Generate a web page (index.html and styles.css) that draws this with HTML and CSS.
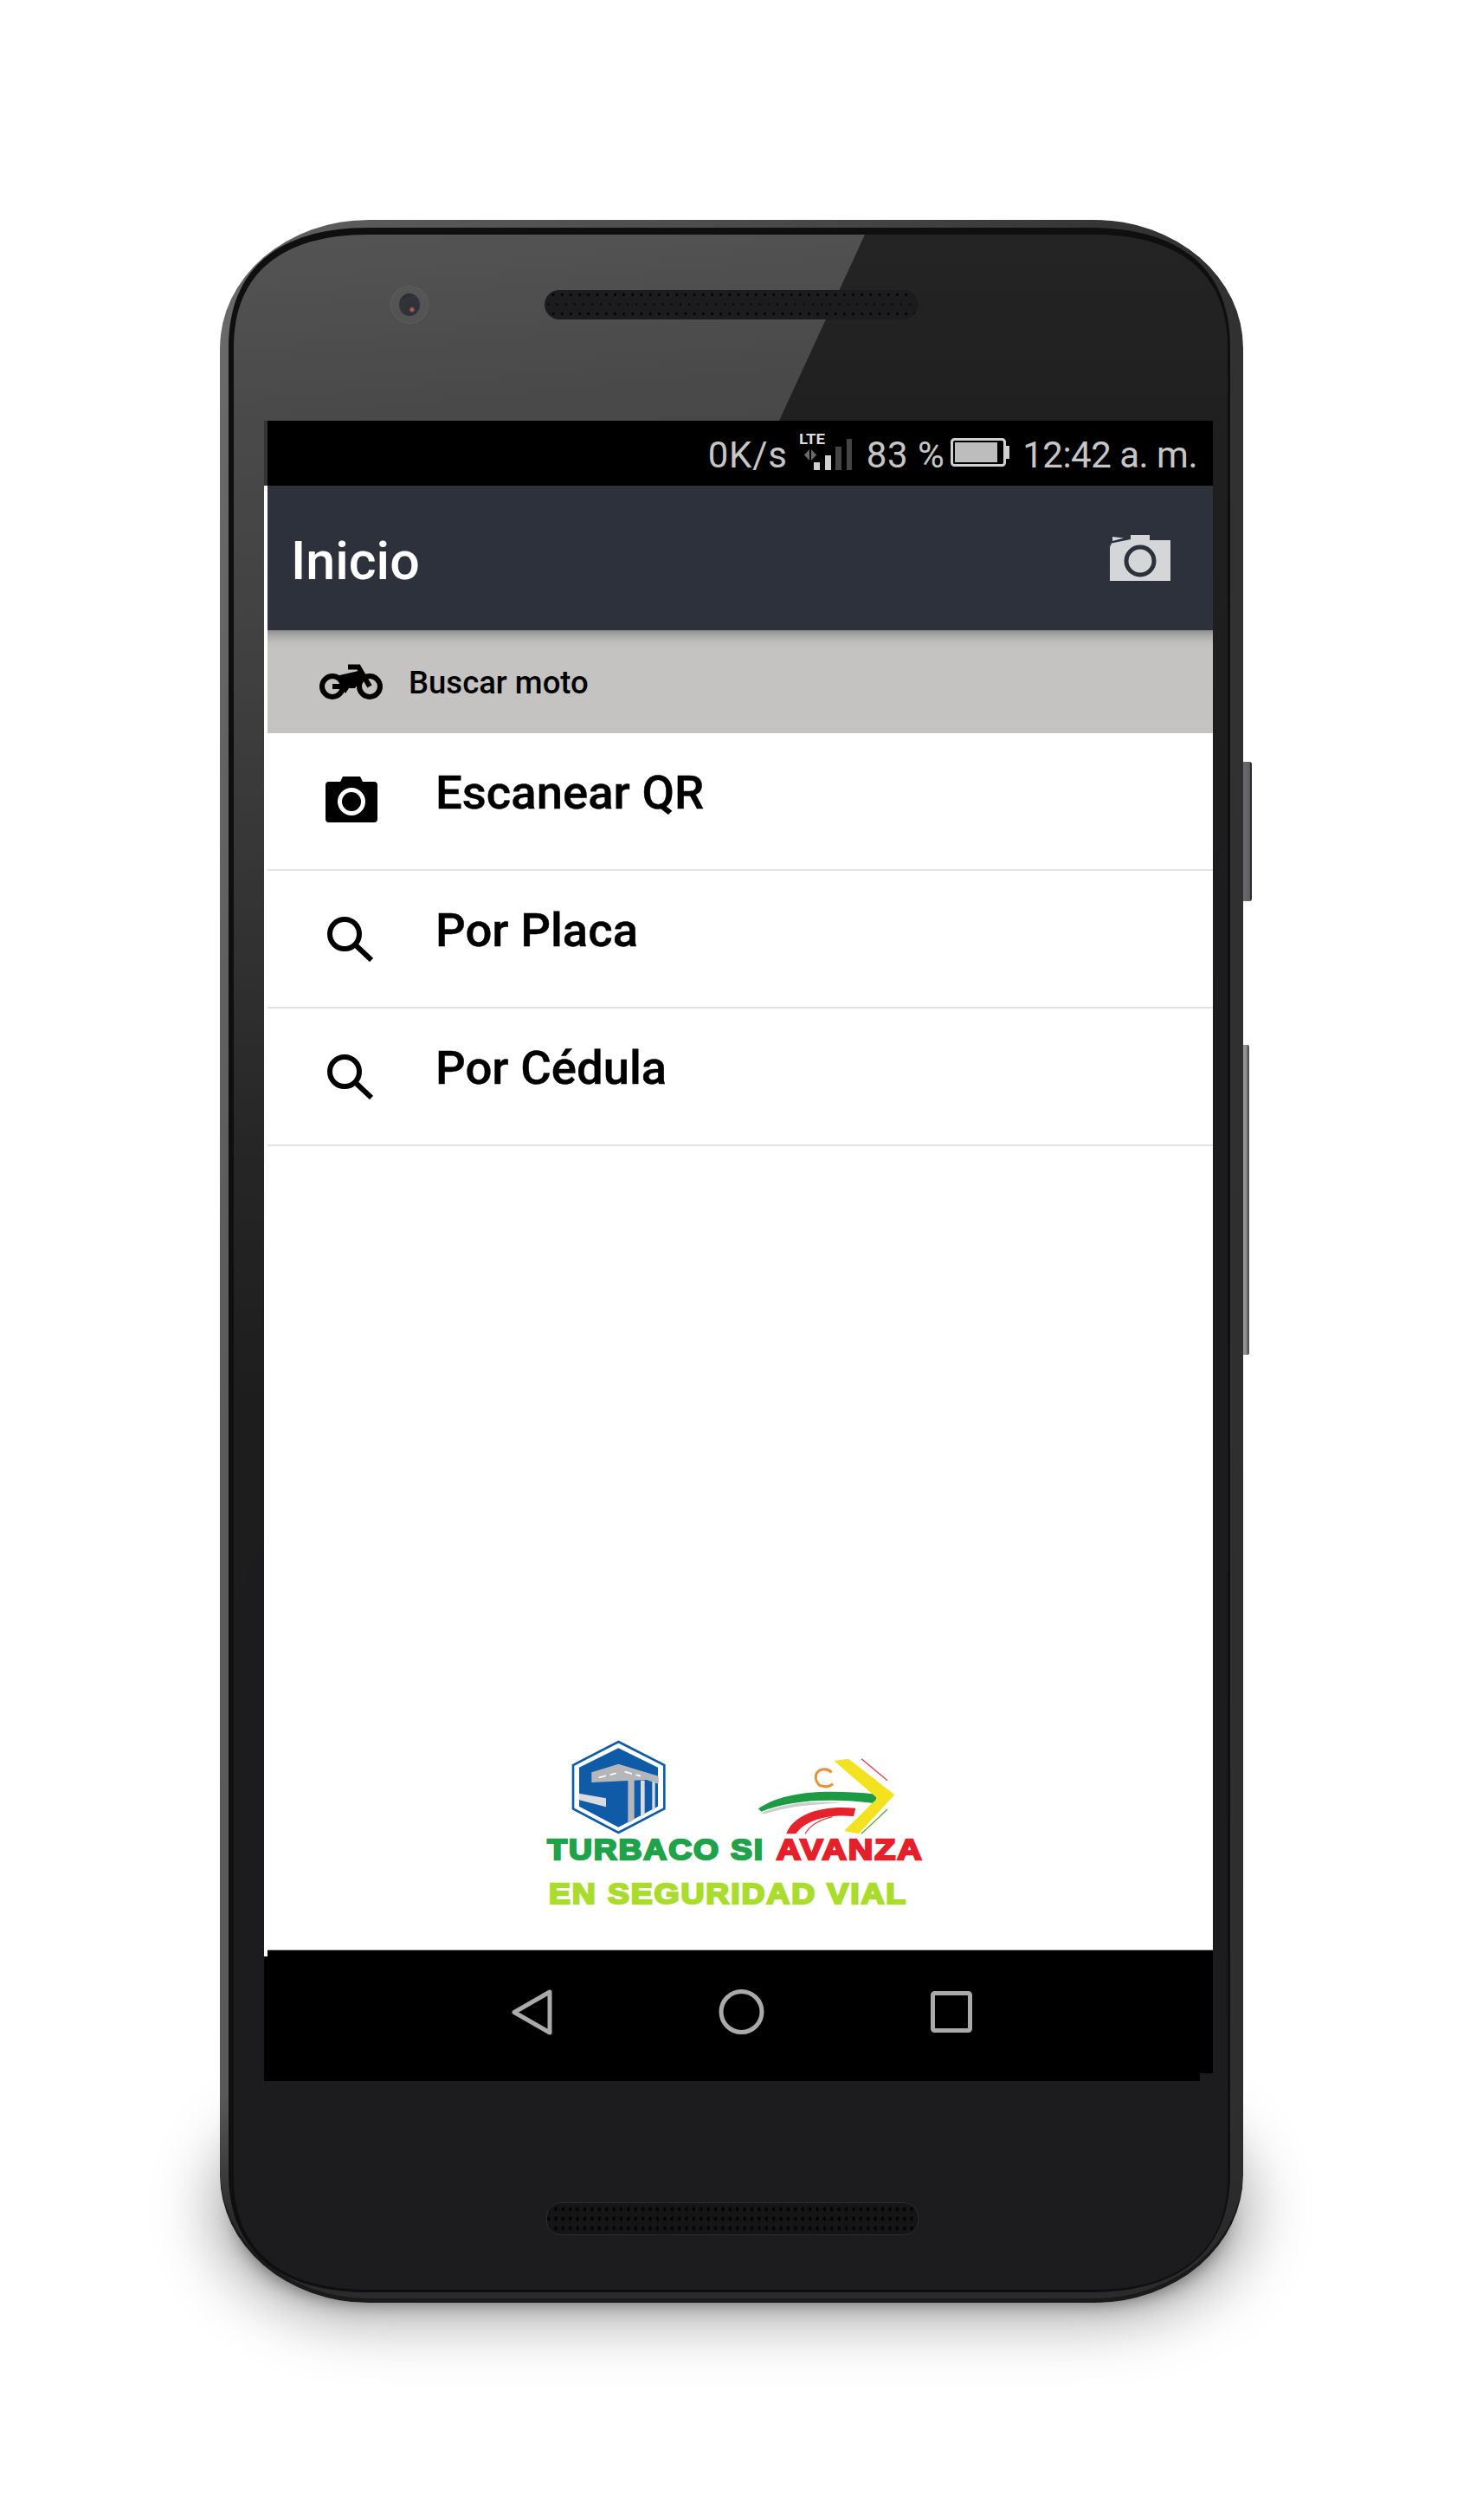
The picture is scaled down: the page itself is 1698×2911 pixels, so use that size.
FILE: index.html
```html
<!DOCTYPE html>
<html lang="es">
<head>
<meta charset="utf-8">
<title>Inicio</title>
<link rel="stylesheet" href="styles.css">
</head>
<body>
<main class="stage">
  <div class="phone">
    <span class="side-key key-power"></span>
    <span class="side-key key-volume"></span>
    <div class="shell">
    <div class="rim">
      <div class="glass">
        <header class="bezel bezel-top">
          <div class="lens"><span class="lens-core"></span></div>
          <div class="speaker speaker-top"></div>
        </header>
        <section class="screen">
          <div class="status">
            <span class="st-speed">0K/s</span>
            <svg class="st-signal" viewBox="0 -4 64 48" width="64" height="48">
              <text class="lte" x="1" y="12" textLength="30" lengthAdjust="spacingAndGlyphs">LTE</text>
              <path class="sig-dim" d="M13 18v13l-6-6.500zM15 18v13l6-6.500z"/>
              <rect class="sig-on" x="18" y="33" width="7" height="9"/>
              <rect class="sig-on" x="31" y="25" width="7" height="17"/>
              <rect class="sig-off" x="43" y="15" width="7" height="27"/>
              <rect class="sig-off" x="56" y="6" width="6" height="36"/>
            </svg>
            <span class="st-batt">83 %</span>
            <svg class="st-battery" viewBox="0 0 68 33" width="68" height="33">
              <rect class="bat-frame" x="1.500" y="1.500" width="61" height="30" rx="3"/>
              <rect class="bat-fill" x="5" y="5" width="49" height="23"/>
              <rect class="bat-fill-light" x="64" y="9" width="4" height="15"/>
            </svg>
            <span class="st-time">12:42 a. m.</span>
          </div>
          <div class="appbar">
            <h1 class="appbar-title">Inicio</h1>
            <svg class="appbar-camera" viewBox="0 0 70 53" width="70" height="53">
              <path class="cam-light" d="M0 53V14L2 9.500 24 5V0H46V6H70V53Z"/>
              <path class="cam-light" d="M3 2 16 3.500 3 7Z"/>
              <ellipse class="cam-ring" cx="35" cy="30" rx="16" ry="16"/>
            </svg>
          </div>
          <div class="section-bar">
            <svg class="moto" viewBox="0 0 73 41" width="73" height="41">
              <circle class="moto-stroke" cx="15" cy="26" r="12"/>
              <circle class="moto-stroke" cx="58" cy="26" r="12"/>
              <path class="moto-stroke" d="M33 3.500H45L58 26"/>
              <path class="moto-stroke" d="M15 26H30"/>
              <path class="moto-fill" d="M19 14 45 8 51 15 41 28 34 28 30 34 24 24Z"/>
            </svg>
            <span class="section-label">Buscar moto</span>
          </div>
          <ul class="menu">
            <li class="menu-row">
              <svg class="menu-icon icon-cam" viewBox="0 0 60 53" width="60" height="53">
                <path class="cam-black" d="M4 6H17L20 0H40L43 6H56Q60 6 60 10V49Q60 53 56 53H4Q0 53 0 49V10Q0 6 4 6Z"/>
                <circle class="cam-white" cx="30" cy="29" r="13.500"/>
              </svg>
              <span class="menu-text">Escanear QR</span>
            </li>
            <li class="menu-row">
              <svg class="menu-icon icon-search" viewBox="0 0 53 52" width="53" height="52">
                <circle class="search-stroke" cx="20" cy="20" r="17"/>
                <path class="search-stroke" d="M33 33 51 50"/>
              </svg>
              <span class="menu-text">Por Placa</span>
            </li>
            <li class="menu-row">
              <svg class="menu-icon icon-search" viewBox="0 0 53 52" width="53" height="52">
                <circle class="search-stroke" cx="20" cy="20" r="17"/>
                <path class="search-stroke" d="M33 33 51 50"/>
              </svg>
              <span class="menu-text">Por Cédula</span>
            </li>
          </ul>
          <div class="brand">
            <svg class="brand-art" viewBox="0 0 1440 720" width="480" height="240">
              <path class="hex-outer" d="M343 66 502 147V298L343 381 186 298V147Z"/>
              <path class="hex-inner" d="M343 88 480 155V290L343 362 207 290V155Z"/>
              <path class="road" d="M250 172 343 143 482 185V212L440 198 250 207Z"/>
              <path class="road-light" d="M207 245 300 262V292L207 268Z"/>
              <path class="road" d="M376 195H398V335L376 348Z"/>
              <path class="road-light" d="M420 200H434V318L420 326Z"/>
              <path class="road-light" d="M460 205H470V300L460 306Z"/>
              <path class="dash" d="M275 190 335 175M365 170 420 185"/>
              <path class="swoosh-orange" d="M1082 172C1065 155 1035 160 1028 180 1024 195 1030 212 1045 220M1045 218C1060 224 1075 222 1086 212"/>
              <path class="swoosh-grey" d="M835 314C920 278 1010 268 1120 278 1010 282 920 292 850 316Z"/>
              <path class="swoosh-green" d="M828 298C900 248 1020 226 1238 248L1236 280C1060 258 930 272 838 308Z"/>
              <path class="swoosh-red" d="M925 385C950 315 1050 285 1165 296L1158 324C1060 316 990 340 958 385Z"/>
              <path class="swoosh-thin" d="M990 385C1010 350 1050 334 1085 326"/>
              <path class="swoosh-yellow" d="M1090 132 1140 125 1300 250 1175 385 1125 375 1240 262Z"/>
              <path class="swoosh-thin" d="M1185 125 1275 200"/>
              <path class="swoosh-thin-green" d="M1185 385 1275 300"/>
              <text class="brand-green" x="97" y="475" textLength="752" lengthAdjust="spacingAndGlyphs">TURBACO SI</text>
              <text class="brand-red" x="890" y="475" textLength="510" lengthAdjust="spacingAndGlyphs">AVANZA</text>
              <text class="brand-lime" x="102" y="626" textLength="1242" lengthAdjust="spacingAndGlyphs">EN SEGURIDAD VIAL</text>
            </svg>
          </div>
          <nav class="softkeys">
            <svg class="key-back" viewBox="0 0 48 55" width="48" height="55"><path class="soft" d="M45 4V51L4 27.500Z"/></svg>
            <svg class="key-home" viewBox="0 0 53 52" width="53" height="52"><circle class="soft" cx="26.500" cy="26" r="23.500"/></svg>
            <svg class="key-recent" viewBox="0 0 48 48" width="48" height="48"><rect class="soft" x="2.500" y="2.500" width="43" height="43" rx="2"/></svg>
          </nav>
        </section>
        <footer class="bezel bezel-bottom">
          <div class="speaker speaker-bottom"></div>
        </footer>
      </div>
    </div>
    </div>
  </div>
</main>
</body>
</html>
```
FILE: styles.css
```css
* { box-sizing: border-box; }
html { background: #fff; }
body { margin: 0; padding: 0; height: 2911px; overflow: hidden; font-family: Roboto, "Liberation Sans", sans-serif; }

.stage { padding: 254px 0 0 254px; }

.phone {
  position: relative;
  width: 1182px;
  height: 2406px;
}
.phone::before {
  content: "";
  position: absolute;
  z-index: -1;
  left: 26px;
  right: 26px;
  bottom: 18px;
  height: 190px;
  border-radius: 170px / 110px;
  background: #000;
  box-shadow:
    0 12px 26px 2px rgba(0,0,0,.6),
    0 4px 70px 34px rgba(0,0,0,.34);
}

.shell {
  height: 100%;
  padding: 9px 15px 12px 10px;
  clip-path: path("M0 148C0 52 60 0 172 0H1010C1122 0 1182 52 1182 148V2258C1182 2354 1122 2406 1010 2406H172C60 2406 0 2354 0 2258Z");
  background:
    linear-gradient(180deg, transparent 90%, #2b2b2b 96%),
    linear-gradient(95deg, #6b6b6b 0, #5c5c5c 8%, #4a4a4a 45%, #343434 75%, #2d2d2d 100%);
  border-radius: 172px / 148px;
  box-shadow: inset 0 -5px 0 #1a1a1a;
}

.side-key { position: absolute; }
.key-power {
  left: 1182px; top: 626px; width: 10px; height: 161px;
  border-radius: 0 3px 3px 0;
  background: linear-gradient(90deg, #6d6d6f 0, #5e5e60 75%, #2a2a2a 85%);
}
.key-volume {
  left: 1182px; top: 953px; width: 7px; height: 358px;
  border-radius: 0 2px 2px 0;
  background: linear-gradient(90deg, #9a9a9a 0, #8a8a8a 60%, #555 70%);
}

.rim {
  height: 100%;
  padding: 8px 3px 3px 6px;
  clip-path: path("M0 138C0 48 57 0 162 0H995C1100 0 1157 48 1157 138V2247C1157 2337 1100 2385 995 2385H162C57 2385 0 2337 0 2247Z");
  background: #0f0f0f;
}

.glass {
  position: relative;
  height: 100%;
  display: flex;
  flex-direction: column;
  overflow: hidden;
  clip-path: path("M0 130C0 45 55 0 156 0H992C1093 0 1148 45 1148 130V2244C1148 2329 1093 2374 992 2374H156C55 2374 0 2329 0 2244Z");
  background: linear-gradient(180deg, #242424 0, #1f1f1f 260px, #1c1c1e 900px);
}
.glass::before {
  content: "";
  position: absolute;
  inset: 0;
  clip-path: polygon(0 0, 729px 0, 0 1583px);
  background: linear-gradient(175deg, #545454 0, #4a4a4a 200px, #404040 500px, #363636 720px, #262626 1050px, #1d1d1e 1350px);
}

.bezel { position: relative; flex: none; }
.bezel-top {
  height: 215px;
  padding: 64px 358px 0 181px;
  display: flex;
  align-items: flex-start;
  justify-content: space-between;
}
.bezel-bottom {
  height: 241px;
  padding: 140px 0 0 361px;
}

.lens {
  width: 44px; height: 44px; margin-top: -5px;
  border-radius: 50%;
  display: flex; align-items: center; justify-content: center;
  background: rgba(255,255,255,.03);
  border: 1px solid rgba(255,255,255,.05);
}
.lens-core {
  width: 24px; height: 26px;
  border-radius: 50%;
  background: radial-gradient(circle at 62% 72%, #a8605c 0, #a8605c 5%, #2f2f38 16%, #33333c 60%, #222226 100%);
}

.speaker { border-radius: 17px; }
.speaker-top {
  width: 431px; height: 34px;
  background:
    radial-gradient(circle 1.600px at 5px 5.500px, #050505 99%, transparent),
    radial-gradient(circle 1.600px at 10.100px 16.500px, #050505 99%, transparent),
    #1c1c1e;
  background-size: 10.200px 22px;
  background-position: 5px 0;
}
.speaker-bottom {
  width: 430px; height: 38px;
  border: 1px solid #2c2c2c;
  background:
    radial-gradient(ellipse 1.800px 2.600px at 4px 5px, #050505 99%, transparent),
    #151516;
  background-size: 8.400px 11px;
  background-position: 6px 2px;
  background-clip: padding-box;
}

.screen {
  position: relative;
  flex: 1;
  min-height: 0;
  margin: 0 17px 0 35px;
  display: flex;
  flex-direction: column;
  background: #fff;
}

.status {
  height: 75px;
  flex: none;
  padding: 0 18px 0 0;
  display: flex;
  align-items: center;
  justify-content: flex-end;
  background: #000;
  border-left: 4px solid #333;
  color: #c6c6c6;
  font-size: 42px;
  font-weight: 400;
  line-height: 1;
}
.status span { position: relative; top: 2px; }
.st-speed { margin-right: 12px; letter-spacing: .8px; }
.st-signal { margin: -6px 15px 0 0; }
.st-batt { margin-right: 7px; letter-spacing: .5px; }
.st-battery { margin: -2px 15px 0 0; }
.st-time { letter-spacing: -.5px; }
.lte { font: 700 16px Roboto, sans-serif; fill: #ddd; }
.sig-dim { fill: #6a6a6a; }
.sig-on { fill: #cfcfcf; }
.sig-off { fill: #444; }
.bat-frame { fill: none; stroke: #d0d0d0; stroke-width: 3; }
.bat-fill { fill: #bdbdbd; }
.bat-fill-light { fill: #d0d0d0; }

.appbar {
  height: 167px;
  flex: none;
  margin-left: 4px;
  padding: 0 49px 0 27px;
  display: flex;
  align-items: center;
  justify-content: space-between;
  background: #2d313c;
}
.appbar-title {
  margin: 7px 0 0;
  color: #fff;
  font-size: 61px;
  font-weight: 500;
  line-height: 1;
}
.appbar-camera { margin-top: -1px; }
.cam-light { fill: #d4d6d8; }
.cam-ring { fill: #d4d6d8; stroke: #2d313c; stroke-width: 5; }

.section-bar {
  height: 119px;
  flex: none;
  margin-left: 4px;
  padding: 0 0 0 60px;
  display: flex;
  align-items: center;
  background: linear-gradient(180deg, #8d8d8f 0, #a9a8a8 6px, #bebdbb 14px, #c4c3c1 20px);
}
.moto { margin-top: -1px; }
.moto-stroke { fill: none; stroke: #000; stroke-width: 6; }
.moto-fill { fill: #000; }
.section-label {
  margin: 3px 0 0 30px;
  color: #000;
  font-size: 36.500px;
  font-weight: 500;
  line-height: 1;
}

.menu { flex: none; margin: 0; padding: 0; list-style: none; }
.menu-row {
  height: 159px;
  margin-left: 4px;
  display: flex;
  align-items: flex-start;
  border-bottom: 2px solid #e3e3e3;
}
.menu-icon { flex: none; }
.icon-cam { margin: 50px 67px 0 67px; }
.icon-search { margin: 53px 72px 0 69px; }
.cam-black { fill: #000; }
.cam-white { fill: none; stroke: #fff; stroke-width: 5; }
.search-stroke { fill: none; stroke: #000; stroke-width: 6; }
.menu-text {
  margin-top: 38px;
  color: #000;
  font-size: 54.500px;
  font-weight: 500;
  line-height: 60px;
  -webkit-text-stroke: .4px #000;
}

.brand {
  flex: 1;
  min-height: 0;
  padding-left: 295px;
  display: flex;
  align-items: flex-end;
}
.brand-art { display: block; margin-bottom: 22px; }
.hex-outer { fill: #fff; stroke: #0f5ba8; stroke-width: 8; }
.hex-inner { fill: #0f5ba8; }
.road { fill: #b4b6ba; }
.road-light { fill: #d9dbde; }
.dash { fill: none; stroke: #fff; stroke-width: 5; stroke-dasharray: 26 14; }
.swoosh-orange { fill: none; stroke: #e9913a; stroke-width: 9; }
.swoosh-green { fill: #1d9a44; }
.swoosh-grey { fill: #c9cfca; }
.swoosh-red { fill: #e6232c; }
.swoosh-yellow { fill: #f3e21f; }
.swoosh-thin { fill: none; stroke: #d8474c; stroke-width: 4; }
.swoosh-thin-green { fill: none; stroke: #5fa83a; stroke-width: 4; }
.brand-green, .brand-red, .brand-lime {
  font-family: "Liberation Sans", Arial, sans-serif;
  font-weight: 700;
  font-size: 100px;
  letter-spacing: 5px;
  stroke-width: 7px;
}
.brand-green { fill: #1fa24a; stroke: #1fa24a; }
.brand-red { fill: #e5202a; stroke: #e5202a; }
.brand-lime { fill: #a9dc2c; stroke: #a9dc2c; }

.softkeys {
  position: relative;
  height: 152px;
  flex: none;
  padding: 44px 0 0 285px;
  display: flex;
  align-items: flex-start;
  background: #000;
  border-top: 1px solid #aaa;
}
.softkeys::before {
  content: "";
  position: absolute;
  left: 0; top: -1px;
  width: 4px; height: 8px;
  background: #fff;
}
.softkeys::after {
  content: "";
  position: absolute;
  right: 0; bottom: 0;
  width: 15px; height: 9px;
  background: #1c1c1e;
}
.key-home { margin: 1px 0 0 192px; }
.key-recent { margin: 3px 0 0 192px; }
.soft { fill: none; stroke: #aaa; stroke-width: 5; stroke-linejoin: round; }
```
